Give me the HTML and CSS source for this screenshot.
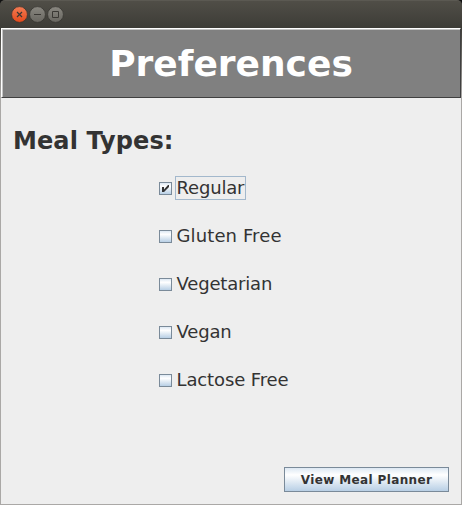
FILE: index.html
```html
<!DOCTYPE html>
<html lang="en">
<head>
<meta charset="utf-8">
<title>Preferences</title>
<link rel="stylesheet" href="styles.css">
</head>
<body>
<div class="window">
  <div class="titlebar">
    <svg class="controls" width="54" height="18" viewBox="0 0 54 18">
      <defs>
        <linearGradient id="close" x1="0" y1="0" x2="0" y2="1"><stop offset="0" stop-color="#f37c54"/><stop offset="1" stop-color="#e4491b"/></linearGradient>
        <linearGradient id="plain" x1="0" y1="0" x2="0" y2="1"><stop offset="0" stop-color="#898780"/><stop offset="1" stop-color="#686660"/></linearGradient>
      </defs>
      <g stroke="#33322e" stroke-opacity=".7">
        <circle cx="8.5" cy="8.5" r="7.9" fill="url(#close)"/>
        <circle cx="26.5" cy="8.5" r="7.9" fill="url(#plain)"/>
        <circle cx="44.5" cy="8.5" r="7.9" fill="url(#plain)"/>
      </g>
      <g fill="none" stroke="#3a3834">
        <path d="M6 6l5 5M11 6l-5 5" stroke-width="1.2"/>
        <path d="M23 8.5h7"/>
        <path d="M41.5 5.5h6v6h-6z"/>
      </g>
    </svg>
  </div>
  <div class="client">
    <header class="banner"><h1>Preferences</h1></header>
    <main class="content">
      <h2>Meal Types:</h2>
      <div class="options">
        <div class="option focused"><span class="box"><svg width="11" height="11" viewBox="0 0 11 11"><path d="M2 4h2v2.5L8 2h1v2L4 9H2z" fill="#333"/></svg></span><span class="label snug">Regular</span></div>
        <div class="option"><span class="box"></span><span class="label loose">Gluten Free</span></div>
        <div class="option"><span class="box"></span><span class="label snug">Vegetarian</span></div>
        <div class="option"><span class="box"></span><span class="label snug">Vegan</span></div>
        <div class="option"><span class="box"></span><span class="label close">Lactose Free</span></div>
      </div>
      <button class="action">View Meal Planner</button>
    </main>
  </div>
</div>
</body>
</html>
```
FILE: styles.css
```css
* { box-sizing: border-box; }
body { margin: 0; background: #111; font-family: "DejaVu Sans", sans-serif; color: #333; }
.window { width: 462px; height: 505px; display: flex; flex-direction: column; }
.titlebar { height: 28px; padding: 5px 0 0 11px; border-radius: 5px 5px 0 0; border-top: 1px solid #5b5952; background: linear-gradient(#504e47, #3d3c37); }
.controls { display: block; }
.client { flex: 1; display: flex; flex-direction: column; border: solid #aaa8a6; border-width: 0 1px 1px; border-image: linear-gradient(#3d3c37, #aaa8a6 70px) 1; background: #eee; }
.banner { height: 70px; background: #808080; border: 1px solid; border-color: #fff #404040 #404040 #fff; box-shadow: inset 1px 1px #c5c5c5; }
h1 { margin: 0; padding-top: 1px; font-size: 36px; line-height: 68px; text-align: center; color: #fff; }
.content { flex: 1; display: flex; flex-direction: column; padding: 29px 12px 12px; }
h2 { margin: 0; font-size: 24px; line-height: 28px; letter-spacing: .1px; }
.options { display: flex; flex-direction: column; gap: 24px; margin: 21px 0 0 146px; }
.option { display: flex; align-items: center; gap: 3px; height: 24px; }
.box { width: 13px; height: 13px; margin-top: 1px; border: 1px solid #7a8a99; background: linear-gradient(#dde8f3, #fff 30%, #b8cfe5); }
.box svg { display: block; }
.label { height: 24px; padding: 0 1px 0 .5px; border: 1px solid transparent; font-size: 18px; line-height: 22px; white-space: nowrap; }
.snug { letter-spacing: -.18px; }
.close { letter-spacing: -.12px; }
.loose { letter-spacing: .12px; }
.focused .label { border-color: #a3b8cc; }
.action { align-self: flex-end; width: 165px; height: 25px; margin-top: auto; padding: 0; border: 1px solid #7a8a99; background: linear-gradient(#dde8f3, #fff 30%, #b8cfe5); font: bold 12px "DejaVu Sans", sans-serif; letter-spacing: .37px; color: #333; }
```
